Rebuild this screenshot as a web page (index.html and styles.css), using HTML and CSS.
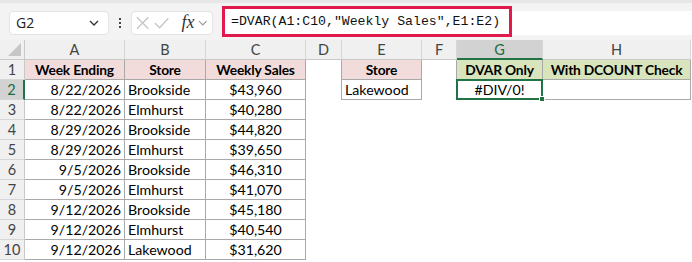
FILE: index.html
```html
<!DOCTYPE html>
<html lang="en">
<head>
  <meta charset="UTF-8">
  <title>DVAR sheet</title>
  <link rel="stylesheet" href="styles.css">
</head>
<body>

  <div class="toolbar">
    <div class="name-box">
      <span>G2</span>
      <svg class="chev" width="12" height="8" viewBox="0 0 12 8"><path d="M2 2 L6 6 L10 2" fill="none" stroke="#333" stroke-width="1.3"/></svg>
    </div>
    <div class="dots"><i></i><i></i><i></i></div>
    <div class="fx-box">
      <svg width="16" height="16" viewBox="0 0 16 16"><path d="M2 2 L14 14 M14 2 L2 14" stroke="#c4c4c4" stroke-width="1.3"/></svg>
      <svg width="18" height="16" viewBox="0 0 18 16"><path d="M2 8 L7 13 L16 3" fill="none" stroke="#c4c4c4" stroke-width="1.3"/></svg>
      <span class="fx">fx</span>
      <svg class="chev-sm" width="10" height="8" viewBox="0 0 10 8"><path d="M1 2 L5 6 L9 2" fill="none" stroke="#999" stroke-width="1.2"/></svg>
    </div>
    <div class="formula-bar">
      <div class="formula-mark">=DVAR(A1:C10,"Weekly Sales",E1:E2)</div>
      <div class="formula-rest"></div>
    </div>
  </div>

  <div class="sheet">
    <!-- column headers -->
    <div class="corner"><span class="tri"></span></div>
    <div class="colh">A</div>
    <div class="colh">B</div>
    <div class="colh">C</div>
    <div class="colh">D</div>
    <div class="colh">E</div>
    <div class="colh">F</div>
    <div class="colh sel">G</div>
    <div class="colh">H</div>

    <!-- row 1 -->
    <div class="rowh">1</div>
    <div class="c b hd-red">Week Ending</div>
    <div class="c b hd-red">Store</div>
    <div class="c b hd-red">Weekly Sales</div>
    <div class="c edge"></div>
    <div class="c b hd-red">Store</div>
    <div class="c edge"></div>
    <div class="c b hd-green">DVAR Only</div>
    <div class="c b hd-green">With DCOUNT Check</div>

    <!-- row 2 -->
    <div class="rowh sel">2</div>
    <div class="c b r">8/22/2026</div>
    <div class="c b l">Brookside</div>
    <div class="c b m">$43,960</div>
    <div class="c edge"></div>
    <div class="c b l">Lakewood</div>
    <div class="c edge"></div>
    <div class="c b m active">#DIV/0!<span class="handle"></span></div>
    <div class="c b"></div>

    <!-- row 3 -->
    <div class="rowh">3</div>
    <div class="c b r">8/22/2026</div>
    <div class="c b l">Elmhurst</div>
    <div class="c b m">$40,280</div>
    <div class="c"></div><div class="c"></div><div class="c"></div><div class="c"></div><div class="c"></div>

    <!-- row 4 -->
    <div class="rowh">4</div>
    <div class="c b r">8/29/2026</div>
    <div class="c b l">Brookside</div>
    <div class="c b m">$44,820</div>
    <div class="c"></div><div class="c"></div><div class="c"></div><div class="c"></div><div class="c"></div>

    <!-- row 5 -->
    <div class="rowh">5</div>
    <div class="c b r">8/29/2026</div>
    <div class="c b l">Elmhurst</div>
    <div class="c b m">$39,650</div>
    <div class="c"></div><div class="c"></div><div class="c"></div><div class="c"></div><div class="c"></div>

    <!-- row 6 -->
    <div class="rowh">6</div>
    <div class="c b r">9/5/2026</div>
    <div class="c b l">Brookside</div>
    <div class="c b m">$46,310</div>
    <div class="c"></div><div class="c"></div><div class="c"></div><div class="c"></div><div class="c"></div>

    <!-- row 7 -->
    <div class="rowh">7</div>
    <div class="c b r">9/5/2026</div>
    <div class="c b l">Elmhurst</div>
    <div class="c b m">$41,070</div>
    <div class="c"></div><div class="c"></div><div class="c"></div><div class="c"></div><div class="c"></div>

    <!-- row 8 -->
    <div class="rowh">8</div>
    <div class="c b r">9/12/2026</div>
    <div class="c b l">Brookside</div>
    <div class="c b m">$45,180</div>
    <div class="c"></div><div class="c"></div><div class="c"></div><div class="c"></div><div class="c"></div>

    <!-- row 9 -->
    <div class="rowh">9</div>
    <div class="c b r">9/12/2026</div>
    <div class="c b l">Elmhurst</div>
    <div class="c b m">$40,540</div>
    <div class="c"></div><div class="c"></div><div class="c"></div><div class="c"></div><div class="c"></div>

    <!-- row 10 -->
    <div class="rowh">10</div>
    <div class="c b r">9/12/2026</div>
    <div class="c b l">Lakewood</div>
    <div class="c b m">$31,620</div>
    <div class="c"></div><div class="c"></div><div class="c"></div><div class="c"></div><div class="c"></div>
  </div>

</body>
</html>
```

FILE: styles.css
```css
body {
  margin: 0;
  background: #ffffff;
  font-family: Lato, "Open Sans", sans-serif;
  color: #000;
}

.toolbar {
  height: 40px;
  box-sizing: border-box;
  background: #f3f3f3;
  border-top: 3px solid #e6e6e6;
  display: flex;
  align-items: center;
  padding-left: 9px;
}

.name-box {
  width: 100px;
  height: 24px;
  box-sizing: border-box;
  background: #fff;
  border: 1px solid #e3e3e3;
  border-radius: 4px;
  display: flex;
  align-items: center;
  justify-content: space-between;
  padding: 0 8px 0 6px;
  font-family: "Open Sans", sans-serif;
  font-size: 14px;
  color: #222;
  margin-top: 2px;
}

.dots {
  width: 22px;
  display: flex;
  flex-direction: column;
  align-items: center;
  gap: 2px;
  margin-top: 2px;
}

.dots i {
  width: 2px;
  height: 2px;
  background: #444;
}

.fx-box {
  width: 82px;
  height: 24px;
  box-sizing: border-box;
  background: #fff;
  border: 1px solid #e3e3e3;
  border-radius: 4px;
  display: flex;
  align-items: center;
  padding: 0 4px 0 3px;
  gap: 3px;
  margin-top: 2px;
}

.fx {
  font-family: "Liberation Serif", serif;
  font-style: italic;
  font-size: 18px;
  color: #333;
  margin-left: 8px;
}

.chev-sm {
  margin-left: 1px;
}

.formula-bar {
  flex: 1;
  display: flex;
  align-items: center;
  margin-left: 9px;
  height: 37px;
}

.formula-mark {
  width: 290px;
  height: 31px;
  box-sizing: border-box;
  border: 3px solid #e2194b;
  background: #fff;
  font-family: "Liberation Mono", monospace;
  font-size: 13.2px;
  line-height: 25px;
  padding-left: 6px;
  color: #111;
  white-space: nowrap;
}

.formula-rest {
  flex: 1;
  height: 24px;
  background: #fff;
  margin-top: 2px;
}

.sheet {
  display: grid;
  grid-template-columns: 25px 100px 81px 100px 36px 80px 35px 86px 148px;
  grid-template-rows: 20px repeat(10, 20px);
}

.corner,
.colh,
.rowh {
  background: #f0f0f0;
  box-sizing: border-box;
  color: #444;
  font-size: 14.5px;
  text-align: center;
  line-height: 20px;
}

.corner {
  position: relative;
  border-right: 1px solid #c8c8c8;
  border-bottom: 1px solid #c8c8c8;
}

.tri {
  position: absolute;
  right: 3px;
  bottom: 3px;
  width: 0;
  height: 0;
  border-left: 13px solid transparent;
  border-bottom: 13px solid #c6c6c6;
}

.colh {
  border-right: 1px solid #d6d6d6;
  border-bottom: 1px solid #c8c8c8;
}

.colh.sel {
  background: #d2d2d2;
  color: #1e6b40;
  border-bottom: 2px solid #217346;
}

.rowh {
  border-right: 1px solid #c8c8c8;
  border-bottom: 1px solid #d6d6d6;
}

.rowh.sel {
  background: #d2d2d2;
  color: #1e6b40;
  border-right: 2px solid #217346;
}

.c {
  box-sizing: border-box;
  font-size: 14.2px;
  line-height: 20px;
  padding: 0 3px;
  white-space: nowrap;
  overflow: hidden;
}

.c.b {
  border-right: 1px solid #a9a9a9;
  border-bottom: 1px solid #a9a9a9;
}

.c.edge {
  border-right: 1px solid #a9a9a9;
}

.r { text-align: right; }
.l { text-align: left; }
.m { text-align: center; }

.hd-red,
.hd-green {
  font-weight: 700;
  font-size: 13.8px;
  letter-spacing: -0.2px;
  text-align: center;
}

.hd-red { background: #f2dcdb; }
.hd-green { background: #d8e4bc; }

.active {
  position: relative;
  overflow: visible;
  border: 2px solid #217346 !important;
  margin-left: -1px;
  margin-top: -1px;
  height: 21px;
  line-height: 17px;
}

.handle {
  position: absolute;
  right: -4px;
  bottom: -4px;
  width: 6px;
  height: 6px;
  background: #217346;
  border: 1px solid #fff;
  box-sizing: border-box;
}
```
